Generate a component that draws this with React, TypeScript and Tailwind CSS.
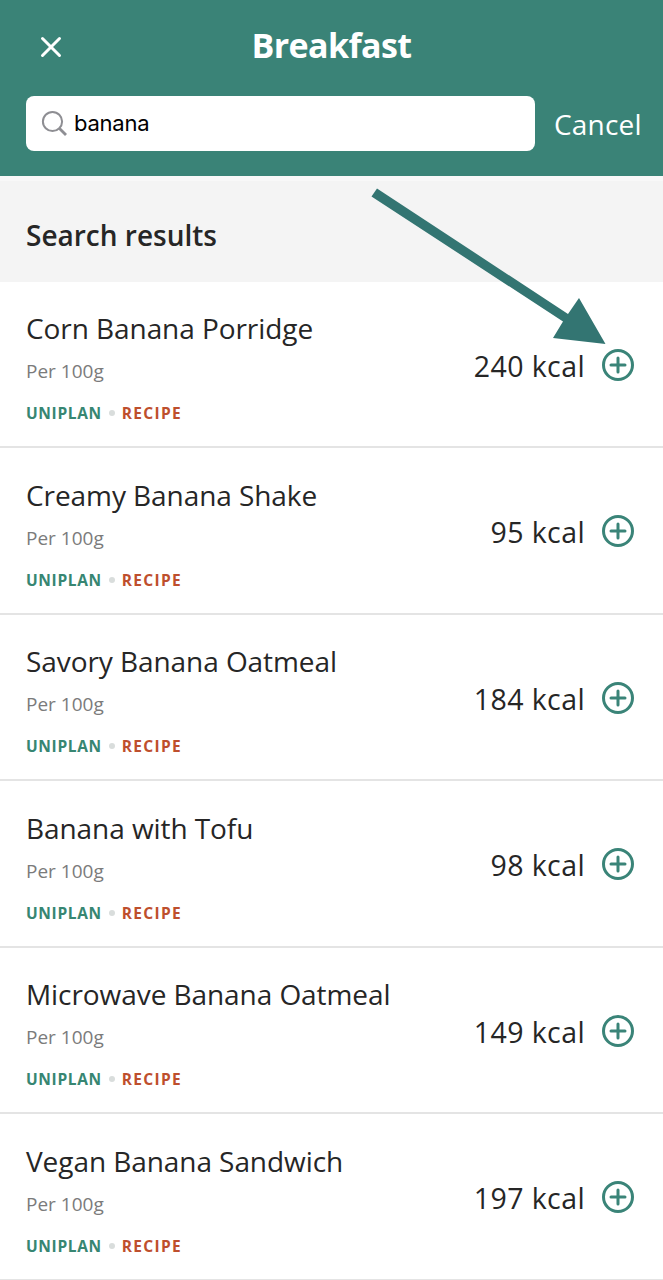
import { X } from "lucide-react"

const foods = [
    { name: "Corn Banana Porridge", kcal: 240 },
    { name: "Creamy Banana Shake", kcal: 95 },
    { name: "Savory Banana Oatmeal", kcal: 184 },
    { name: "Banana with Tofu", kcal: 98 },
    { name: "Microwave Banana Oatmeal", kcal: 149 },
    { name: "Vegan Banana Sandwich", kcal: 197 },
]

function FoodRow({ name, kcal }: { name: string; kcal: number }) {
    return (
        <li className="flex h-[166.5px] items-center justify-between border-b-2 border-[#e4e4e4] pl-[26px] pr-[29px]">
            <div className="flex flex-col pt-[13px]">
                <h3 className="text-[28px] leading-[40px] tracking-[-0.07px] text-[#262626]">{name}</h3>
                <p className="mt-[4px] text-[19px] leading-[38px] text-[#7b7b7b]">Per 100g</p>
                <div className="mt-[4px] flex items-center text-[15.5px] font-bold leading-[38px]">
                    <span className="tracking-[0.65px] text-[#378672]">UNIPLAN</span>
                    <span className="ml-[7px] mr-[7px] size-[6px] rounded-full bg-[#d9dddc]" />
                    <span className="tracking-[1.3px] text-[#be4f2d]">RECIPE</span>
                </div>
            </div>
            <div className="flex items-center pt-[2px]">
                <span className="pt-[2px] text-[28.5px] leading-[40px] tracking-[0.4px] text-[#262626]">{kcal} kcal</span>
                <button className="ml-[17px]">
                    <svg className="size-8" viewBox="0 0 32 32" fill="none" stroke="#3a8478">
                        <circle cx="16" cy="16" r="14.5" strokeWidth="3" />
                        <path d="M16 9v14M9 16h14" strokeWidth="3" strokeLinecap="round" />
                    </svg>
                </button>
            </div>
        </li>
    )
}

function App() {
    return (
        <main className="relative h-[1280px] w-[663px] overflow-hidden bg-white font-['Open_Sans',sans-serif]">
            <header className="h-[176px] bg-[#3a8377] pt-[22px] text-white">
                <div className="grid h-[48px] grid-cols-[1fr_auto_1fr] items-center px-[34px]">
                    <button className="pt-[2px]">
                        <X className="size-[34px]" strokeWidth={2.1} />
                    </button>
                    <h1 className="pb-[2px] text-[34px] font-bold leading-[46px] tracking-[-0.6px]">Breakfast</h1>
                </div>
                <div className="mt-[26px] flex items-center pl-[26px]">
                    <div className="flex h-[55px] w-[509px] items-center rounded-[8px] bg-white pl-[15px]">
                        <svg className="size-[28px]" viewBox="0 0 28 28" fill="none" stroke="#8e8e93">
                            <circle cx="11.5" cy="11.5" r="9.6" strokeWidth="2" />
                            <path d="M18.5 18.5l6.5 6.5" strokeWidth="2.8" />
                        </svg>
                        <span className="ml-[5px] font-['Inter',sans-serif] text-[22px] tracking-[-0.25px] text-black">banana</span>
                    </div>
                    <button className="ml-[19px] text-[28px] leading-[40px] tracking-[0.2px]">Cancel</button>
                </div>
            </header>

            <section className="flex h-[105.5px] items-center border-t-[5px] border-[#f8f8f8] bg-[#f4f4f4] pl-[26px] pt-[8px]">
                <h2 className="text-[28px] font-semibold leading-[40px] text-[#262626]">Search results</h2>
            </section>

            <ul>
                {foods.map((food) => (
                    <FoodRow key={food.name} {...food} />
                ))}
            </ul>

            {/* callout arrow pointing at the first add button */}
            <svg className="absolute left-[370px] top-[185px] h-[162px] w-[238px]" viewBox="370 185 238 162" fill="#337572">
                <path d="M377 188.5L568 314L579 298L605.500 344L553 338L563 321.500L371.500 196.500Z" />
            </svg>
        </main>
    )
}

export default App
